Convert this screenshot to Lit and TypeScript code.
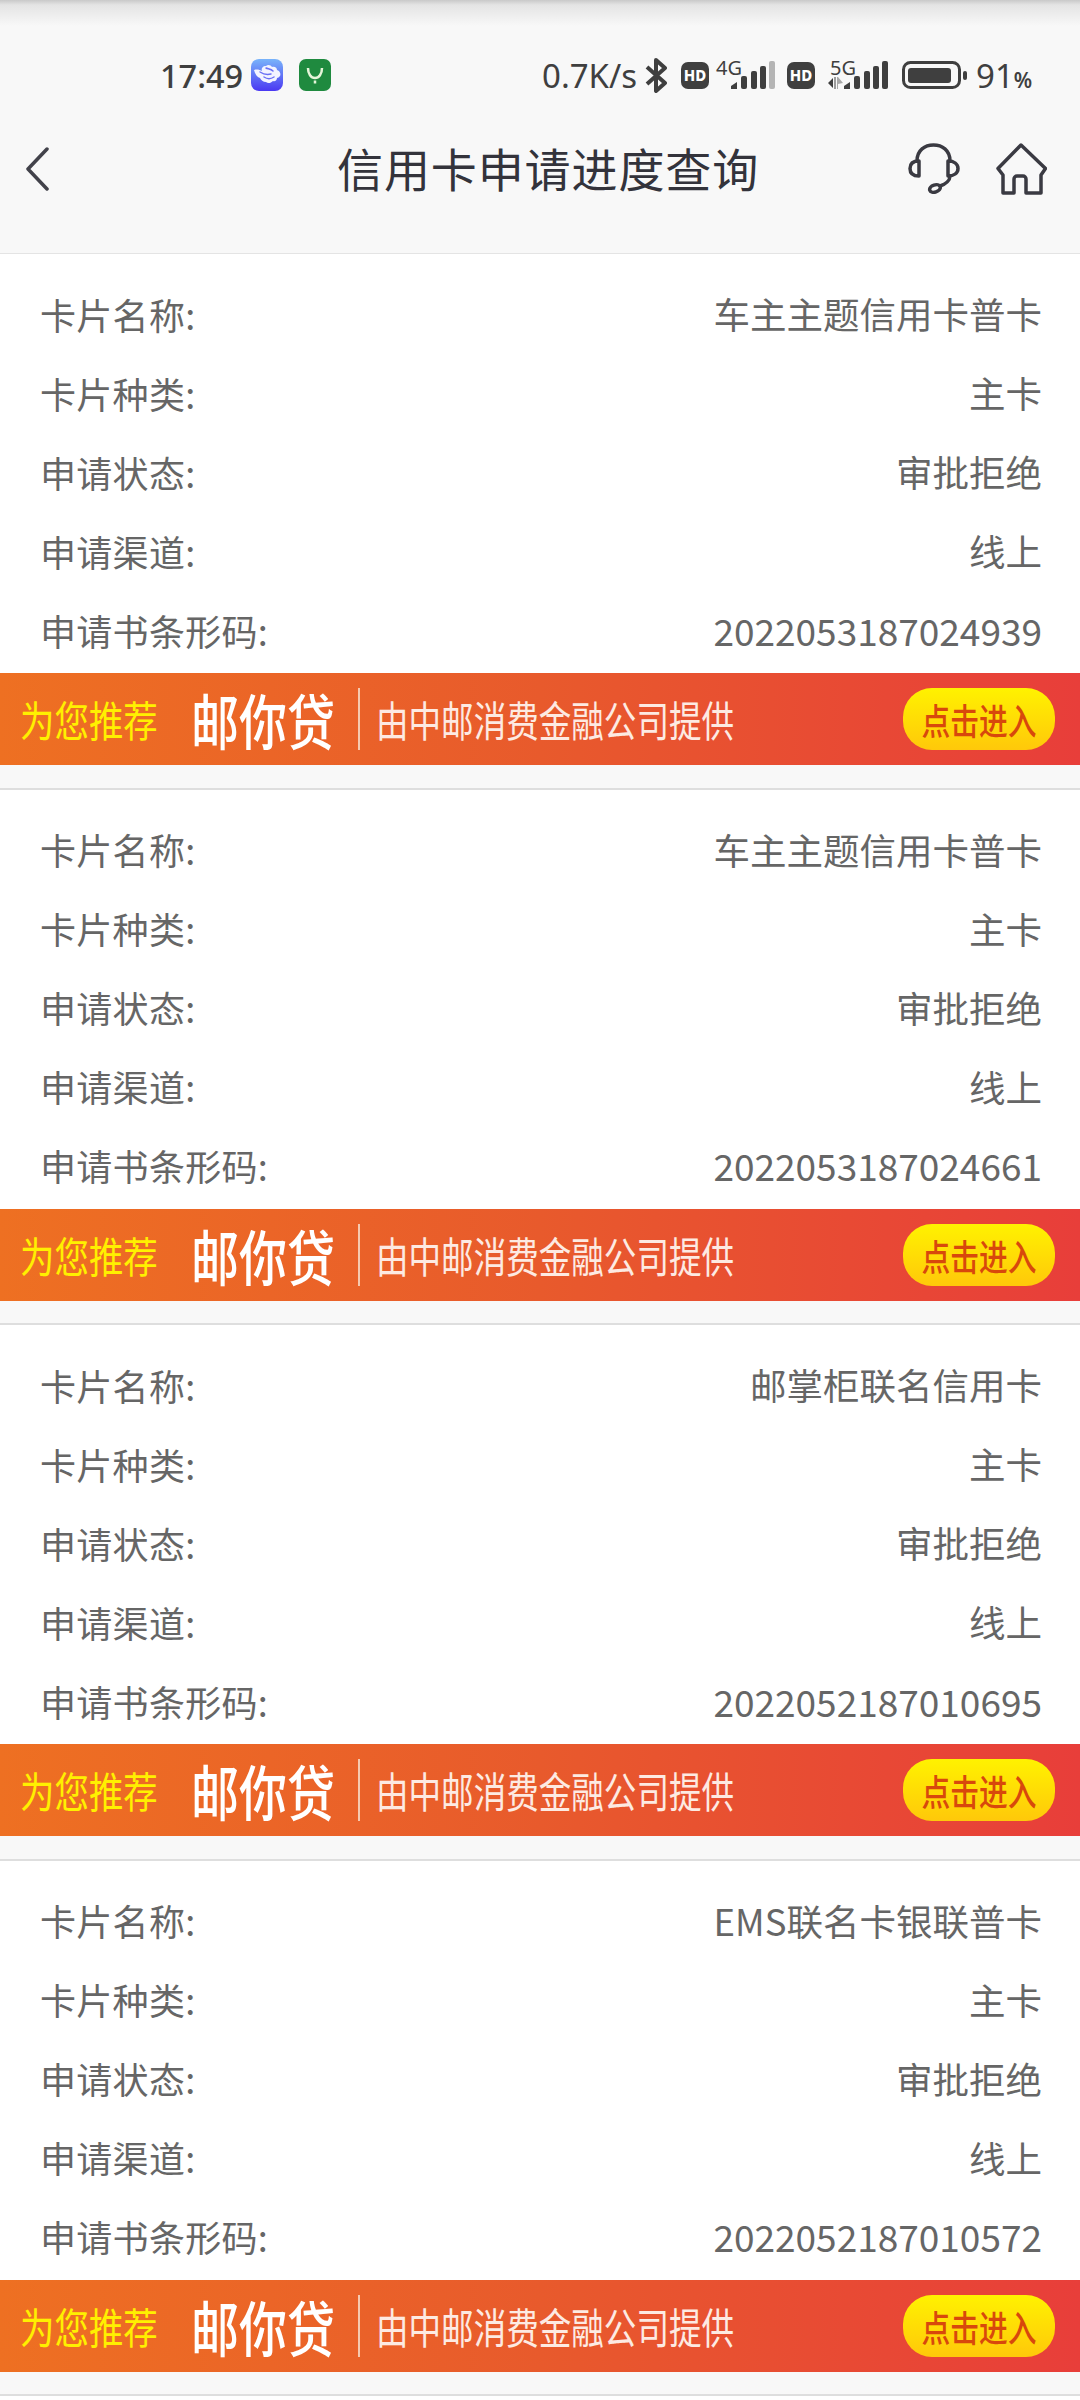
import { LitElement, css, html } from "lit";
import { customElement } from "lit/decorators.js";

interface CardRecord {
  name: string;
  code: string;
}

const records: CardRecord[] = [
  { name: "车主主题信用卡普卡", code: "2022053187024939" },
  { name: "车主主题信用卡普卡", code: "2022053187024661" },
  { name: "邮掌柜联名信用卡", code: "2022052187010695" },
  { name: "EMS联名卡银联普卡", code: "2022052187010572" },
];

const signalBars = (lastColor: string) => html`
  <svg class="bars" width="44" height="28" viewBox="0 0 44 28">
    <path d="M0 28v-3l6-4v7z" fill="#3f3f3f" />
    <rect x="10" y="15" width="6" height="13" rx="2" fill="#3f3f3f" />
    <rect x="20" y="10" width="6" height="18" rx="2" fill="#3f3f3f" />
    <rect x="29" y="5" width="6" height="23" rx="2" fill="#3f3f3f" />
    <rect x="38" y="0" width="6" height="28" rx="2" fill=${lastColor} />
  </svg>
`;

@customElement("app-root")
export class AppRoot extends LitElement {
  static override styles = css`
    :host {
      display: block;
      width: 1080px;
      height: 2400px;
      overflow: hidden;
      background: #fff;
      font-family: "Noto Sans CJK SC", "Noto Sans", sans-serif;
    }
    .header {
      height: 254px;
      box-sizing: border-box;
      padding-top: 51px;
      background: linear-gradient(#c9c9c9 0, #e4e4e4 5px, #f8f8f8 26px);
      border-bottom: 1px solid #e4e4e4;
    }
    .status {
      height: 48px;
      display: flex;
      align-items: center;
      padding-left: 160px;
      color: #3f3f3f;
    }
    .time {
      font-family: "Noto Sans", sans-serif;
      font-size: 32.500px;
      font-weight: 500;
      width: 91px;
    }
    .blue {
      flex: none;
    }
    .green {
      flex: none;
      margin-left: 16px;
    }
    .speed {
      font-family: "Noto Sans", sans-serif;
      font-size: 33px;
      margin-left: 211px;
      width: 103px;
      white-space: nowrap;
    }
    .bt {
      flex: none;
    }
    .hd {
      flex: none;
      width: 28px;
      height: 27px;
      border-radius: 7px;
      background: #3f3f3f;
      color: #fff;
      font-family: "Noto Sans", sans-serif;
      font-size: 15px;
      font-weight: 800;
      line-height: 27px;
      text-align: center;
    }
    .hd-first {
      margin-left: 14px;
    }
    .hd-second {
      margin-left: 12px;
    }
    .net {
      flex: none;
      position: relative;
      height: 28px;
      display: flex;
      align-items: flex-end;
      justify-content: flex-end;
    }
    .net span {
      position: absolute;
      top: -3px;
      font-family: "Noto Sans", sans-serif;
      font-size: 20px;
      line-height: 19px;
    }
    .net-4g {
      margin-left: 7px;
      width: 59px;
    }
    .net-4g span {
      left: 0;
    }
    .net-5g {
      margin-left: 13px;
      width: 60px;
    }
    .net-5g span {
      left: 2px;
    }
    .battery {
      flex: none;
      margin-left: 14px;
    }
    .battery-pct {
      font-family: "Noto Sans", sans-serif;
      font-size: 33px;
      margin-left: 9px;
      white-space: nowrap;
    }
    .battery-pct small {
      font-size: 21px;
      font-weight: 600;
    }
    .nav {
      height: 139px;
      display: flex;
      align-items: center;
      padding-left: 26px;
    }
    .title {
      margin-left: 287px;
      width: 421px;
      font-size: 46px;
      letter-spacing: 0.9px;
      line-height: 1;
      margin-top: -3px;
      color: #33333b;
      white-space: nowrap;
    }
    .headset {
      margin-left: 150px;
    }
    .home {
      margin-left: 36px;
    }
    .card {
      height: 535.600px;
      box-sizing: border-box;
      padding-top: 20px;
      background: #fff;
      display: flex;
      flex-direction: column;
    }
    .row {
      height: 79px;
      flex: none;
      display: flex;
      justify-content: space-between;
      align-items: center;
      padding: 0 38px 0 40px;
      font-size: 36px;
      letter-spacing: 0.3px;
      color: #666;
    }
    .row .value {
      font-size: 36.500px;
      letter-spacing: 0;
    }
    .row .code {
      font-size: 37px;
    }
    .banner {
      height: 92px;
      flex: none;
      margin-top: 4px;
      display: flex;
      align-items: center;
      overflow: hidden;
      background: linear-gradient(90deg, #ee7022 0%, #e85a2c 50%, #e83e3a 100%);
    }
    .gap {
      flex: 1;
      background: #f8f8f8;
      border-bottom: 2px solid #dedede;
    }
    .squeezed {
      flex: none;
      white-space: nowrap;
      transform-origin: left center;
      line-height: 1;
    }
    .pitch {
      margin-left: 20px;
      width: 171px;
      font-size: 42px;
      color: #fff000;
      transform: scaleX(0.82);
    }
    .brand {
      width: 167px;
      font-size: 60px;
      font-weight: 500;
      color: #fff;
      transform: scaleX(0.8);
    }
    .rule {
      flex: none;
      width: 2px;
      height: 62px;
      background: #f6c9b0;
      margin-right: 16px;
    }
    .source {
      width: 527px;
      font-size: 42px;
      color: #fdeae2;
      transform: scaleX(0.775);
    }
    .enter {
      flex: none;
      width: 152px;
      height: 62px;
      border-radius: 29px;
      display: flex;
      align-items: center;
      justify-content: center;
      background: linear-gradient(#fff200, #ffc80a);
    }
    .enter span {
      font-size: 36px;
      font-weight: 500;
      line-height: 1;
      color: #d8480c;
      white-space: nowrap;
      transform: scaleX(0.8);
    }
  `;

  private renderStatus() {
    return html`
      <div class="status">
        <span class="time">17:49</span>
        <svg class="blue" width="32" height="32" viewBox="0 0 32 32">
          <defs>
            <linearGradient id="cloud" x1="0" y1="0" x2="0" y2="1">
              <stop offset="0" stop-color="#79b4fa" />
              <stop offset="1" stop-color="#4a38f2" />
            </linearGradient>
          </defs>
          <rect width="32" height="32" rx="8" fill="url(#cloud)" />
          <path
            d="M3 11c3-1 6 0 8 1-1-3 1-5 4-5 2-2 5-1 6 1 3-1 5 1 5 3 3 1 4 4 3 6-1 1-2 2-3 2 0 2-2 4-4 3-2 2-5 3-7 1-3 0-5-2-6-4-3-1-5-4-6-8z"
            fill="#f3f4ff"
          />
          <path
            d="M9 13c3 2 7 3 11 2M13 18c3 2 7 2 10 0M15 9c2 1 5 1 7 3"
            fill="none"
            stroke="#6a70f5"
            stroke-width="1.500"
            stroke-linecap="round"
          />
        </svg>
        <svg class="green" width="32" height="32" viewBox="0 0 32 32">
          <rect width="32" height="32" rx="7" fill="#1f8a3f" />
          <path
            d="M9 9c0 6 3 10 7 10s7-4 7-10M16 21.500v3"
            fill="none"
            stroke="#e6f5da"
            stroke-width="2.500"
          />
        </svg>
        <span class="speed">0.7K/s</span>
        <svg class="bt" width="22" height="35" viewBox="0 0 22 35">
          <path
            d="M2 9l18 16-9 8V2l9 8L2 26"
            fill="none"
            stroke="#3f3f3f"
            stroke-width="4"
            stroke-linejoin="round"
          />
        </svg>
        <div class="hd hd-first">HD</div>
        <div class="net net-4g"><span>4G</span>${signalBars("#b4b4b4")}</div>
        <div class="hd hd-second">HD</div>
        <div class="net net-5g">
          <span>5G</span>
          <svg width="16" height="12" viewBox="0 0 16 12">
            <path d="M0 6l5-5v10zM6.500 0h1v12h-1z" fill="#3f3f3f" />
            <path d="M9 0h1l5 6-5 1v5H9z" fill="#a8a8a8" />
          </svg>
          ${signalBars("#3f3f3f")}
        </div>
        <svg class="battery" width="65" height="28" viewBox="0 0 65 28">
          <rect
            x="1.500"
            y="1.500"
            width="56"
            height="25"
            rx="7"
            fill="none"
            stroke="#3f3f3f"
            stroke-width="3"
          />
          <rect x="6" y="7" width="43" height="15" rx="3" fill="#3f3f3f" />
          <rect x="61" y="10" width="4" height="9" rx="2" fill="#3f3f3f" />
        </svg>
        <span class="battery-pct">91<small>%</small></span>
      </div>
    `;
  }

  private renderNav() {
    return html`
      <div class="nav">
        <svg width="24" height="44" viewBox="0 0 24 44">
          <path
            d="M21 2L2 22l19 20"
            fill="none"
            stroke="#42424a"
            stroke-width="3.500"
            stroke-linecap="round"
            stroke-linejoin="round"
          />
        </svg>
        <div class="title">信用卡申请进度查询</div>
        <svg class="headset" width="52" height="51" viewBox="0 0 52 51">
          <path
            d="M9 18C9 7 17 2 25.500 2S42 7 42 18M42 33c0 4-4 8-10 10"
            fill="none"
            stroke="#3a3a42"
            stroke-width="3.500"
            stroke-linecap="round"
          />
          <path d="M11 18v15C5 33 2 30 2 25.500S5 18 11 18z" fill="none" stroke="#3a3a42" stroke-width="3.500" stroke-linejoin="round" />
          <path d="M40 18v15c6 0 10-3 10-7.500S46 18 40 18z" fill="none" stroke="#3a3a42" stroke-width="3.500" stroke-linejoin="round" />
          <ellipse cx="27" cy="45.500" rx="5.500" ry="3.500" transform="rotate(-18 27 45.500)" fill="none" stroke="#3a3a42" stroke-width="3.500" />
        </svg>
        <svg class="home" width="51" height="52" viewBox="0 0 51 52">
          <path
            d="M25 2L2 25.500 7 32V50h11V36a3 3 0 0 1 3-3h6a3 3 0 0 1 3 3v14h15V32l4.500-6.500z"
            fill="none"
            stroke="#3a3a42"
            stroke-width="3.500"
            stroke-linejoin="round"
          />
        </svg>
      </div>
    `;
  }

  private renderRow(label: string, value: string, valueClass = "value") {
    return html`<div class="row"><span>${label}:</span><span class=${valueClass}>${value}</span></div>`;
  }

  private renderCard(record: CardRecord) {
    return html`
      <section class="card">
        ${this.renderRow("卡片名称", record.name)}
        ${this.renderRow("卡片种类", "主卡")}
        ${this.renderRow("申请状态", "审批拒绝")}
        ${this.renderRow("申请渠道", "线上")}
        ${this.renderRow("申请书条形码", record.code, "value code")}
        <div class="banner">
          <div class="squeezed pitch">为您推荐</div>
          <div class="squeezed brand">邮你贷</div>
          <div class="rule"></div>
          <div class="squeezed source">由中邮消费金融公司提供</div>
          <div class="enter"><span>点击进入</span></div>
        </div>
        <div class="gap"></div>
      </section>
    `;
  }

  override render() {
    return html`
      <div class="header">${this.renderStatus()} ${this.renderNav()}</div>
      ${records.map((record) => this.renderCard(record))}
    `;
  }
}

declare global {
  interface HTMLElementTagNameMap {
    "app-root": AppRoot;
  }
}
